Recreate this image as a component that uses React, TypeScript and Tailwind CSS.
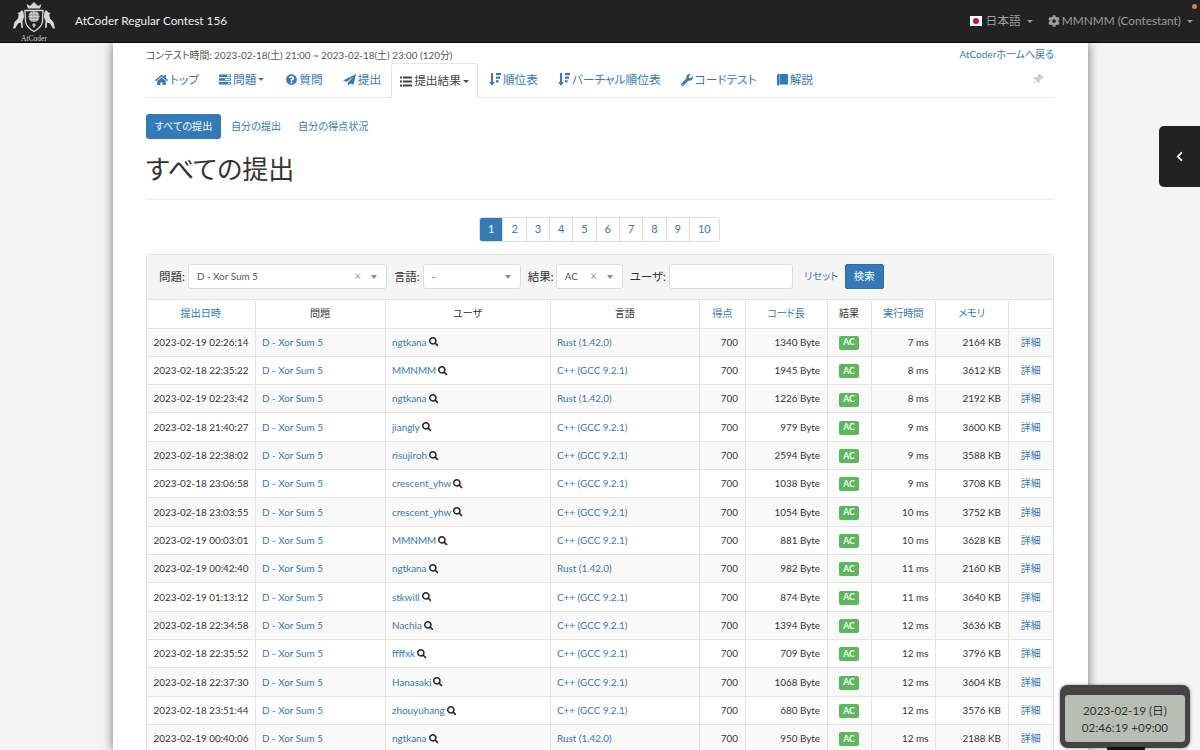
import { FaHome, FaQuestionCircle, FaWrench, FaCog, FaSearch, FaChevronLeft } from "react-icons/fa";
import { BsPinAngleFill } from "react-icons/bs";

const FONT = "font-['Lato','Noto_Sans_CJK_JP',sans-serif] [font-feature-settings:'palt']";

const rows = [
    ["2023-02-19 02:26:14", "ngtkana", "Rust (1.42.0)", "1340", "7", "2164"],
    ["2023-02-18 22:35:22", "MMNMM", "C++ (GCC 9.2.1)", "1945", "8", "3612"],
    ["2023-02-19 02:23:42", "ngtkana", "Rust (1.42.0)", "1226", "8", "2192"],
    ["2023-02-18 21:40:27", "jiangly", "C++ (GCC 9.2.1)", "979", "9", "3600"],
    ["2023-02-18 22:38:02", "risujiroh", "C++ (GCC 9.2.1)", "2594", "9", "3588"],
    ["2023-02-18 23:06:58", "crescent_yhw", "C++ (GCC 9.2.1)", "1038", "9", "3708"],
    ["2023-02-18 23:03:55", "crescent_yhw", "C++ (GCC 9.2.1)", "1054", "10", "3752"],
    ["2023-02-19 00:03:01", "MMNMM", "C++ (GCC 9.2.1)", "881", "10", "3628"],
    ["2023-02-19 00:42:40", "ngtkana", "Rust (1.42.0)", "982", "11", "2160"],
    ["2023-02-19 01:13:12", "stkwill", "C++ (GCC 9.2.1)", "874", "11", "3640"],
    ["2023-02-18 22:34:58", "Nachia", "C++ (GCC 9.2.1)", "1394", "12", "3636"],
    ["2023-02-18 22:35:52", "ffffxk", "C++ (GCC 9.2.1)", "709", "12", "3796"],
    ["2023-02-18 22:37:30", "Hanasaki", "C++ (GCC 9.2.1)", "1068", "12", "3604"],
    ["2023-02-18 23:51:44", "zhouyuhang", "C++ (GCC 9.2.1)", "680", "12", "3576"],
    ["2023-02-19 00:40:06", "ngtkana", "Rust (1.42.0)", "950", "12", "2188"],
];

function Caret() {
    return <span className="inline-block align-middle w-0 h-0 border-x-[3.5px] border-x-transparent border-t-[3.5px] border-t-current" />;
}

function TasksIcon() {
    return (
        <svg width="12" height="11" viewBox="0 0 12 11" fill="currentColor">
            <rect x="0" y="0.5" width="12" height="2.6" />
            <rect x="0" y="4.2" width="12" height="2.6" />
            <rect x="0" y="7.9" width="12" height="2.6" />
            <rect x="8" y="1.2" width="3" height="1.2" fill="#fff" />
            <rect x="6" y="4.9" width="5" height="1.2" fill="#fff" />
            <rect x="9" y="8.6" width="2" height="1.2" fill="#fff" />
        </svg>
    );
}

function SendIcon() {
    return (
        <svg width="13" height="12" viewBox="0 0 13 12" fill="currentColor">
            <path d="M13 0L0 6.500l3.800 1.300L10.500 2.500 5 8.600V12l2.200-2.500 3.300 1.300z" />
        </svg>
    );
}

function ListIcon() {
    return (
        <svg width="12" height="11" viewBox="0 0 12 11" fill="currentColor">
            <rect x="0" y="0.5" width="2" height="2" />
            <rect x="3" y="0.5" width="9" height="2" />
            <rect x="0" y="4.5" width="2" height="2" />
            <rect x="3" y="4.5" width="9" height="2" />
            <rect x="0" y="8.500" width="2" height="2" />
            <rect x="3" y="8.500" width="9" height="2" />
        </svg>
    );
}

function BookIcon() {
    return (
        <svg width="11" height="12" viewBox="0 0 11 12" fill="currentColor">
            <path d="M1.500 0H11v10.500H2a.8.8 0 000 1.500H1.500C.6 12 0 11.300 0 10.500V1.500C0 .6.6 0 1.500 0z" />
            <rect x="2" y="0.500" width="0.800" height="9.500" fill="#9fc0dc" />
        </svg>
    );
}

function SortIcon() {
    return (
        <svg width="12" height="13" viewBox="0 0 12 13" fill="currentColor">
            <path d="M2 0h2v9h1.800L3 13 0.200 9H2z" />
            <rect x="7" y="0" width="5" height="2.200" />
            <rect x="7" y="3.600" width="4" height="2.200" />
            <rect x="7" y="7.200" width="2.600" height="2.200" />
        </svg>
    );
}

function Logo() {
    return (
        <svg width="44" height="33" viewBox="0 0 44 33" className="text-[#d8d8d8]" fill="currentColor">
            <path d="M16 6.500L14.500 2l3.500 2L22 0l4 4 3.500-2L28 6.500z" />
            <path d="M13 8.500h18l-.5 11c-.5 5-5 8-8.500 10-3.500-2-8-5-8.500-10z" fill="none" stroke="currentColor" strokeWidth="1.300" />
            <circle cx="22" cy="14.500" r="5.500" fill="#9a9a9a" />
            <path d="M16.500 14.500h11M22 9v11M17.500 11.500h9M17.500 17.500h9M19 9.500v10M25 9.500v10" stroke="#e8e8e8" strokeWidth=".6" />
            <path d="M20 23l2-2 2 2-2 3z" fill="#bbb" />
            <path d="M10 8l1.500 2 .5 5-1.500 4 .5 7-1.800-.5-.2-5-3 1-3 5H1l1.500-6.500 3.500-3.500.8-4.500L5 11l2.500-.5z" />
            <path d="M34 8l-1.500 2-.5 5 1.500 4-.5 7 1.800-.5.2-5 3 1 3 5H43l-1.500-6.500-3.500-3.500-.8-4.500L39 11l-2.500-.5z" />
        </svg>
    );
}

function Tab({ icon, label, caret, active, className }: { icon: React.ReactNode; label: string; caret?: boolean; active?: boolean; className?: string }) {
    return (
        <div
            className={
                "flex items-center gap-[2px] text-[11.700px] whitespace-nowrap " +
                (active
                    ? "self-end h-[35px] -mb-[3.500px] text-[#444] bg-white border border-b-0 border-[#e5e5e5] rounded-t-[3px] px-[8px] "
                    : "text-[#337ab7] ") +
                (className ?? "")
            }
        >
            {icon}
            <span>{label}</span>
            {caret && <Caret />}
        </div>
    );
}

function Select({ value, clear, w }: { value: string; clear?: boolean; w: string }) {
    return (
        <div className={"h-[25px] bg-white border border-[#ddd] rounded-[3px] flex items-center pl-[8px] text-[9.900px] text-[#555] " + w}>
            <span className="flex-1">{value}</span>
            {clear && <span className="text-[#999] text-[11px] mr-[10px]">×</span>}
            <span className="mr-[9px] w-0 h-0 border-x-[3.5px] border-x-transparent border-t-[4px] border-t-[#888]" />
        </div>
    );
}

const th = "border-r border-[#e5e5e5] font-normal text-center px-1 pt-px text-[10.100px]";
const td = "border-r border-[#e5e5e5] px-[6.500px] whitespace-nowrap";

export default function App() {
    return (
        <div className={"relative h-[750px] overflow-hidden bg-[#f4f4f4] text-[#333] " + FONT}>
            {/* navbar */}
            <div className="h-[43px] bg-[#222] border-b border-[#080808] flex items-center text-white relative z-10">
                <div className="ml-[12px] flex flex-col items-center w-[44px] h-[42px] pt-[2px]">
                    <Logo />
                    <span className="font-['Liberation_Serif',serif] text-[7.500px] leading-[7px] text-[#ccc]">AtCoder</span>
                </div>
                <span className="ml-[19px] text-[11.800px] text-[#eee]">AtCoder Regular Contest 156</span>
                <div className="ml-auto flex items-center text-[11.800px] text-[#9d9d9d] mr-[7px]">
                    <span className="w-[12px] h-[10px] bg-white flex items-center justify-center mr-[3px]">
                        <span className="w-[6px] h-[6px] rounded-full bg-[#c8102e]" />
                    </span>
                    <span>日本語</span>
                    <span className="ml-[6px] flex"><Caret /></span>
                    <FaCog className="ml-[15px] mr-[2px] w-[12px] h-[12px]" />
                    <span>MMNMM (Contestant)</span>
                    <span className="ml-[6px] flex"><Caret /></span>
                </div>
                <span className="absolute right-[3px] top-[4px] w-[5px] h-[5px] rounded-full bg-[#d9822b]" />
            </div>

            {/* main column */}
            <div className="w-[975px] ml-[113px] h-[707px] bg-white shadow-[0_0_10px_rgba(0,0,0,0.55)] pl-[33px] pr-[34px]">
                <div className="flex justify-between items-center h-[22px] pt-[3px] text-[10px]">
                    <span className="text-[#555] text-[9.900px]">コンテスト時間: 2023-02-18(土) 21:00 ~ 2023-02-18(土) 23:00 (120分)</span>
                    <span className="text-[#337ab7] -mt-[3px]">AtCoderホームへ戻る</span>
                </div>

                <div className="flex items-center gap-[20px] h-[32.500px] pb-[2px] border-b-[1.500px] border-[#e8e8e8] pl-[9px] relative">
                    <Tab icon={<FaHome className="w-[13px] h-[12px]" />} label="トップ" />
                    <Tab icon={<TasksIcon />} label="問題" caret className="mr-[2px]" />
                    <Tab icon={<FaQuestionCircle className="w-[11px] h-[11px]" />} label="質問" />
                    <Tab icon={<SendIcon />} label="提出" />
                    <Tab icon={<ListIcon />} label="提出結果" caret active className="-ml-[10px] -mr-[9px]" />
                    <Tab icon={<SortIcon />} label="順位表" />
                    <Tab icon={<SortIcon />} label="バーチャル順位表" />
                    <Tab icon={<FaWrench className="w-[12px] h-[12px]" />} label="コードテスト" />
                    <Tab icon={<BookIcon />} label="解説" />
                    <BsPinAngleFill className="absolute right-[10px] top-[8px] w-[12px] h-[12px] text-[#ccc]" />
                </div>

                <div className="flex items-center mt-[16.500px] text-[10.100px] text-[#337ab7]">
                    <span className="h-[25px] w-[75px] rounded-[3px] bg-[#337ab7] text-white flex items-center justify-center">すべての提出</span>
                    <span className="ml-[10px]">自分の提出</span>
                    <span className="ml-[17px]">自分の得点状況</span>
                </div>

                <h1 className="mt-[12px] text-[26px] leading-[36px] font-normal text-[#333]">すべての提出</h1>
                <div className="mt-[12px] border-b border-[#eee]" />

                <div className="flex justify-center mt-[16.500px] text-[#337ab7] text-[11px]">
                    {["1", "2", "3", "4", "5", "6", "7", "8", "9", "10"].map((n, i) => (
                        <span
                            key={n}
                            className={
                                "h-[25.500px] flex items-center justify-center border border-[#ddd] -ml-px " +
                                (n === "10" ? "w-[31px] rounded-r-[3px] " : "w-[24.300px] ") +
                                (i === 0 ? "bg-[#337ab7] border-[#337ab7] text-white rounded-l-[3px]" : "bg-white")
                            }
                        >
                            {n}
                        </span>
                    ))}
                </div>

                {/* filter + table */}
                <div className="mt-[11.500px] border border-[#e0e0e0] rounded-t-[3px]">
                    <div className="h-[45px] bg-[#f5f5f5] border-b border-[#e5e5e5] flex items-center pl-[12px] text-[11.500px] text-[#333]">
                        <span>問題:</span>
                        <div className="ml-[3px]"><Select value="D - Xor Sum 5" clear w="w-[199px]" /></div>
                        <span className="ml-[7px]">言語:</span>
                        <div className="ml-[3px]"><Select value="-" w="w-[98px]" /></div>
                        <span className="ml-[7px]">結果:</span>
                        <div className="ml-[2px]"><Select value="AC" clear w="w-[67px]" /></div>
                        <span className="ml-[7px]">ユーザ:</span>
                        <div className="ml-[3px] w-[124px] h-[25px] bg-white border border-[#ddd] rounded-[3px]" />
                        <span className="ml-[11px] text-[10.300px] text-[#337ab7]">リセット</span>
                        <span className="ml-[6.500px] w-[39px] h-[25px] rounded-[2px] bg-[#337ab7] border border-[#2e6da4] text-white text-[10.300px] flex items-center justify-center">検索</span>
                    </div>

                    <table className="w-[906px] table-fixed border-collapse text-[9.900px]">
                        <colgroup>
                            <col className="w-[108px]" />
                            <col className="w-[130px]" />
                            <col className="w-[165px]" />
                            <col className="w-[149.500px]" />
                            <col className="w-[45.500px]" />
                            <col className="w-[82px]" />
                            <col className="w-[44px]" />
                            <col className="w-[64.500px]" />
                            <col className="w-[72.500px]" />
                            <col className="w-[45px]" />
                        </colgroup>
                        <thead>
                            <tr className="h-[28.500px] border-b-[1.500px] border-[#e5e5e5]">
                                <th className={th + " text-[#337ab7]"}>提出日時</th>
                                <th className={th}>問題</th>
                                <th className={th}>ユーザ</th>
                                <th className={th}>言語</th>
                                <th className={th + " text-[#337ab7]"}>得点</th>
                                <th className={th + " text-[#337ab7]"}>コード長</th>
                                <th className={th}>結果</th>
                                <th className={th + " text-[#337ab7]"}>実行時間</th>
                                <th className={th + " text-[#337ab7]"}>メモリ</th>
                                <th className="" />
                            </tr>
                        </thead>
                        <tbody>
                            {rows.map((r, i) => (
                                <tr key={i} className={"h-[28.330px] border-b border-[#e5e5e5] " + (i % 2 === 0 ? "bg-[#f9f9f9]" : "bg-white")}>
                                    <td className={td}>{r[0]}</td>
                                    <td className={td + " text-[#337ab7]"}>D - Xor Sum 5</td>
                                    <td className={td}>
                                        <span className="inline-flex items-center gap-[2px]">
                                            <span className="text-[#337ab7]">{r[1]}</span>
                                            <FaSearch className="w-[9.500px] h-[9.500px] text-[#222]" />
                                        </span>
                                    </td>
                                    <td className={td + " text-[#337ab7]"}>{r[2]}</td>
                                    <td className={td + " text-right"}>700</td>
                                    <td className={td + " text-right"}>{r[3]} Byte</td>
                                    <td className={td + " text-center"}>
                                        <span className="inline-flex items-center justify-center w-[20px] h-[14px] rounded-[2px] bg-[#5cb85c] text-white text-[8.500px] font-bold">AC</span>
                                    </td>
                                    <td className={td + " text-right"}>{r[4]} ms</td>
                                    <td className={td + " text-right"}>{r[5]} KB</td>
                                    <td className="text-center text-[#337ab7]">詳細</td>
                                </tr>
                            ))}
                        </tbody>
                    </table>
                </div>
            </div>

            {/* side toggle */}
            <div className="absolute right-0 top-[126px] w-[41px] h-[61px] bg-[#222] rounded-l-[5px] flex items-center justify-center text-white">
                <FaChevronLeft className="w-[9px] h-[11px]" />
            </div>

            {/* clock */}
            <div className="absolute left-[1060px] top-[685px] w-[130px] h-[63px] bg-[#444] rounded-[8px] pt-[10px] pb-[6px] px-[5px] shadow-[0_0_3px_rgba(0,0,0,0.5)]">
                <div className="h-full bg-[#b7beb4] rounded-[3px] flex flex-col items-center justify-center text-[#333] text-[11.700px] leading-[17px]">
                    <span>2023-02-19 (日)</span>
                    <span>02:46:19 +09:00</span>
                </div>
            </div>
            <div className="absolute left-[1107px] top-[747px] w-[38px] h-[3px] bg-[#111]" />
        </div>
    );
}
